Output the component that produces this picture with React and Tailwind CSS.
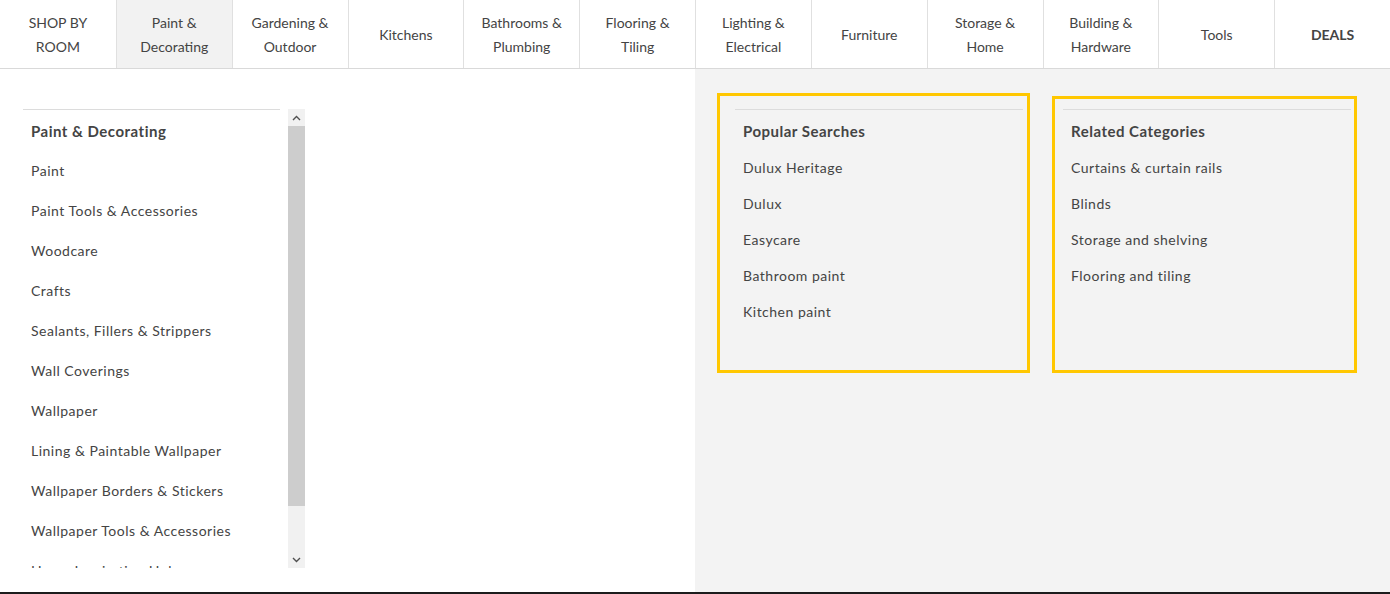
const navItems = [
  ["SHOP BY", "ROOM"],
  ["Paint &", "Decorating"],
  ["Gardening &", "Outdoor"],
  ["Kitchens"],
  ["Bathrooms &", "Plumbing"],
  ["Flooring &", "Tiling"],
  ["Lighting &", "Electrical"],
  ["Furniture"],
  ["Storage &", "Home"],
  ["Building &", "Hardware"],
  ["Tools"],
  ["DEALS"],
];

const subCategories = [
  "Paint",
  "Paint Tools & Accessories",
  "Woodcare",
  "Crafts",
  "Sealants, Fillers & Strippers",
  "Wall Coverings",
  "Wallpaper",
  "Lining & Paintable Wallpaper",
  "Wallpaper Borders & Stickers",
  "Wallpaper Tools & Accessories",
  "Home Inspiration Hub",
];

const popularSearches = ["Dulux Heritage", "Dulux", "Easycare", "Bathroom paint", "Kitchen paint"];
const relatedCategories = ["Curtains & curtain rails", "Blinds", "Storage and shelving", "Flooring and tiling"];

const Caret = ({ down }) => (
  <svg width="9" height="6" viewBox="0 0 9 6" className="text-[#505050]">
    <polyline
      points={down ? "1,1 4.5,4.5 8,1" : "1,5 4.5,1.5 8,5"}
      fill="none"
      stroke="currentColor"
      strokeWidth="1.4"
    />
  </svg>
);

const NavBar = () => (
  <nav className="grid grid-cols-12 h-[69px] border-b border-[#d9d9d9] bg-white">
    {navItems.map((lines, i) => (
      <div
        key={i}
        className={`flex flex-col items-center justify-center pt-[2px] text-[14px] leading-6 text-[#444] ${
          i > 0 ? "border-l border-[#e0e0e0]" : ""
        } ${i === 1 ? "bg-[#f2f2f2]" : ""} ${i === 11 ? "font-bold" : ""}`}
      >
        {lines.map((l) => (
          <span key={l}>{l}</span>
        ))}
      </div>
    ))}
  </nav>
);

const LinkBox = ({ title, links, className }) => (
  <div className={`border-[3px] border-[#ffc700] ${className}`}>
    <div className="border-t border-[#dcdcdc]">
      <div className="h-10 pt-[2px] flex items-center pl-2 text-[15px] font-bold tracking-[0.5px] text-[#444]">
        {title}
      </div>
      {links.map((l) => (
        <div key={l} className="h-9 pb-[2px] flex items-center pl-2 text-[14px] tracking-[0.5px] text-[#444]">
          {l}
        </div>
      ))}
    </div>
  </div>
);

export default function App() {
  return (
    <div className="w-[1390px] h-[594px] flex flex-col bg-white font-['Lato','Liberation_Sans',sans-serif] overflow-hidden">
      <NavBar />
      <div className="flex-1 grid grid-cols-2">
        {/* left: category list */}
        <div className="pl-[23px] pt-10">
          <div className="flex h-[459px]">
            <div className="w-[257px] border-t border-[#dcdcdc] overflow-hidden">
              <div className="h-10 pt-[2px] flex items-center pl-2 text-[15px] font-bold tracking-[0.5px] text-[#444]">
                Paint &amp; Decorating
              </div>
              {subCategories.map((c) => (
                <div
                  key={c}
                  className="h-10 flex items-center pl-2 text-[14px] tracking-[0.5px] text-[#444] whitespace-nowrap"
                >
                  {c}
                </div>
              ))}
            </div>
            <div className="ml-2 w-[17px] flex flex-col bg-[#f1f1f1]">
              <div className="h-[17px] flex items-center justify-center">
                <Caret />
              </div>
              <div className="h-[380px] bg-[#cdcdcd]" />
              <div className="flex-1" />
              <div className="h-[17px] flex items-center justify-center">
                <Caret down />
              </div>
            </div>
          </div>
        </div>

        {/* right: searches and related */}
        <div className="bg-[#f3f3f3] flex items-start">
          <LinkBox
            title="Popular Searches"
            links={popularSearches}
            className="ml-[22px] mt-6 w-[313px] h-[280px] pt-[13px] pl-[15px] pr-1"
          />
          <LinkBox
            title="Related Categories"
            links={relatedCategories}
            className="ml-[22px] mt-[27px] w-[305px] h-[277px] pt-[10px] pl-2 pr-[3px]"
          />
        </div>
      </div>
      <div className="h-[2px] bg-[#1c1c1c]" />
    </div>
  );
}
